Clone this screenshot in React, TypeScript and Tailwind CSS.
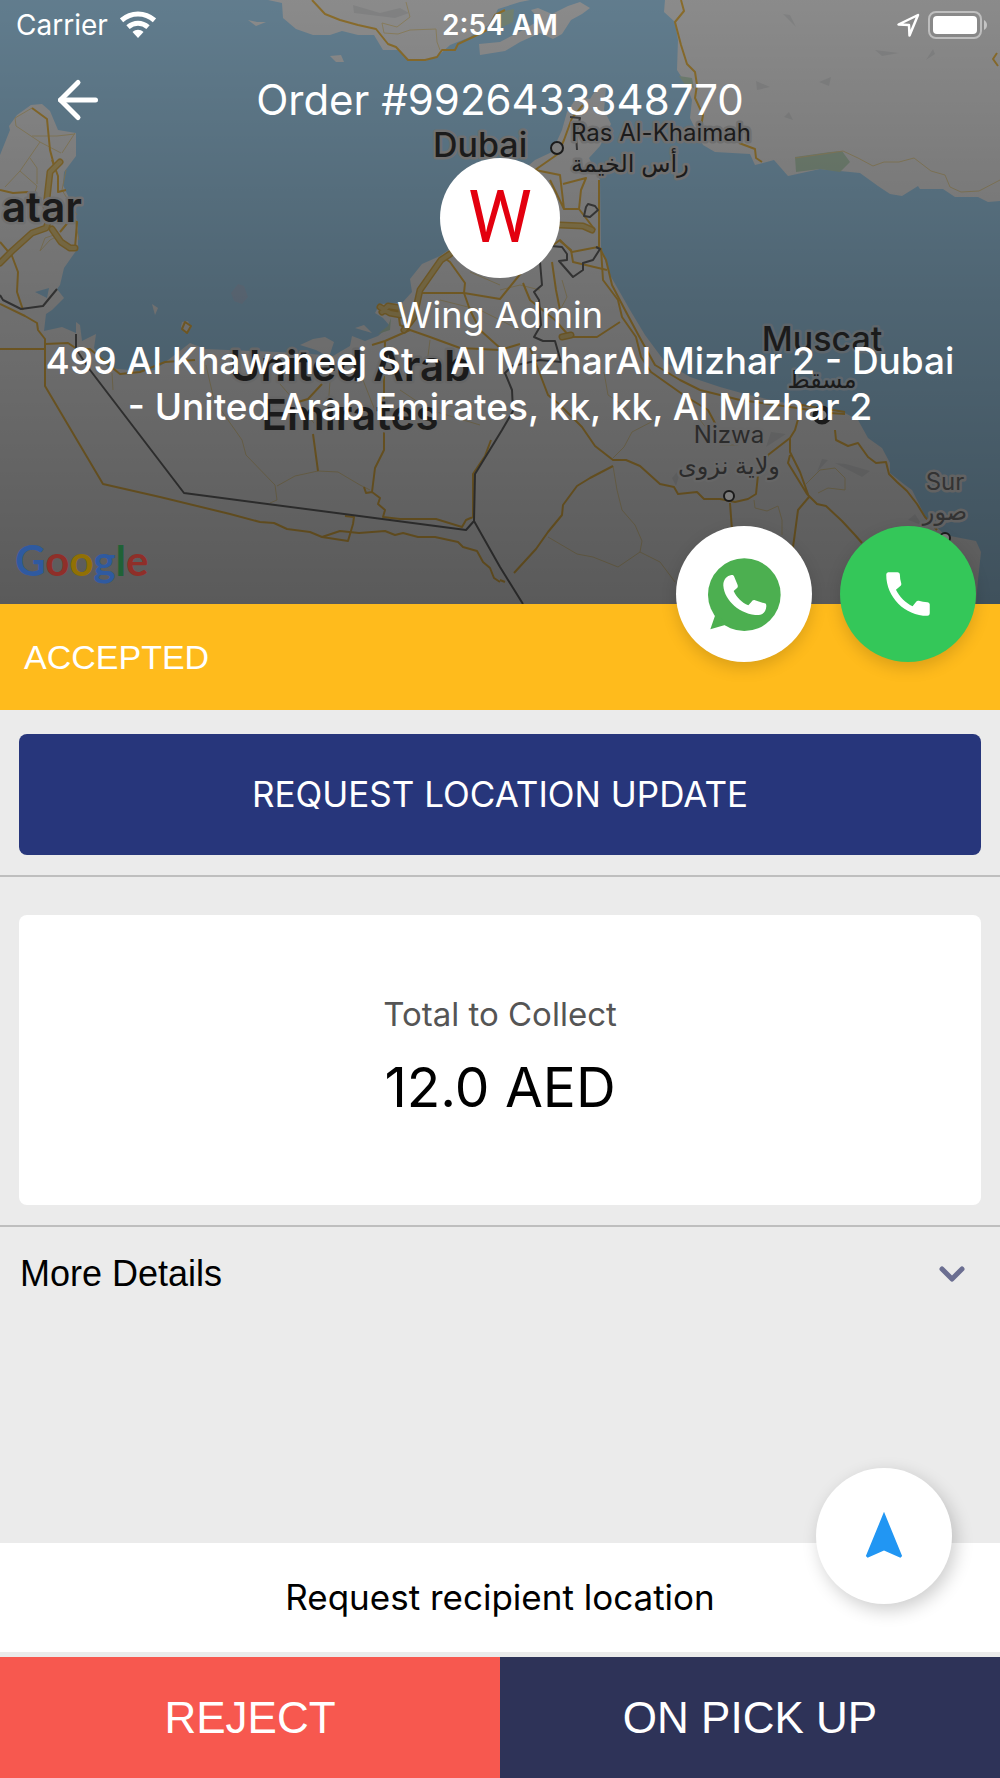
import type { ReactNode } from 'react'
import { ArrowLeft, ChevronDown } from 'lucide-react'
import { MdCall, MdNavigation } from 'react-icons/md'

const order = {
  number: '9926433348770',
  customer: 'Wing Admin',
  address: '499 Al Khawaneej St - Al MizharAl Mizhar 2 - Dubai - United Arab Emirates, kk, kk, Al Mizhar 2',
  status: 'ACCEPTED',
  total: '12.0 AED',
}

const land = [
  // Qatar, the Emirates and Oman
  'M0 155L10 130L9 126L17 115L31 105L42 104L50 111L58 130L76 133V156L64 172L63 185L70 200L76 218L78 228V248L64 268L60 285L57 289L64 298L52 310L46 314L44 331L62 327L76 333V322L80 325L82 341L96 334L94 348L108 368L140 371L155 370L172 357L190 343L205 349L300 353L333 356L350 346L352 336L365 341L378 336L390 326L383 318L375 313L380 304L402 303L412 292L410 279L422 264L440 256L470 235L500 190L535 160L552 152L562 130L567 112L577 97L590 99L600 83L606 88L604 110L611 124L600 146L589 158L600 180L601 248L610 275L630 310L645 335L665 362L690 377L720 387L745 394L780 402L815 407L845 413L858 420L868 438L882 448L890 463V473L905 485L912 490L925 516L945 535L976 541L981 552L978 580L976 604H0Z',
  // Iranian coast
  'M268 0L282 3L283 18L296 29L313 35L330 35L342 31L358 35L374 35L383 50L400 50L408 60L425 61L438 56L450 45L470 37L490 24L498 9L520 2L530 0Z',
  'M665 0L664 12L675 22L678 40L677 70L686 84L692 100L690 118L703 145L715 152L750 154L755 165L774 160L788 176L820 169L860 173L878 186L890 194L902 196L918 186L920 189H943L955 197H978L988 202L1000 201V0Z',
  // islands
  'M479 44L500 42L523 30L540 20L531 10L538 8L552 14L568 6L580 2L590 8L582 14L571 20L562 34L553 39L540 33L520 42L505 51L480 55Z',
  'M248 20L257 22L266 22L256 26Z',
  'M330 56L341 55L344 62L336 62Z',
  'M152 304L158 308L155 315Z',
  'M182 322L188 321L191 328L185 333L181 327Z',
  'M300 345L313 339L325 337L334 342L329 357L316 350Z',
  'M355 328L364 325L372 333Z',
]

const parks = ['M795 157L830 152L842 151L850 162L840 172L820 169L796 172Z', 'M679 76L692 78L694 88L686 86Z', 'M500 12L514 9L513 22L500 28Z', 'M378 334L388 326L391 318L390 330Z']

const hills = ['M353 5L380 13L400 8L409 13L395 18L354 13Z', 'M783 14L790 15L796 27Z', 'M875 50L899 53L882 56Z', 'M926 60L933 49L935 54Z', 'M756 81L770 87L757 90Z', 'M819 82L831 77L829 86Z', 'M784 117L789 112L793 120Z', 'M766 447L771 432L786 434Z', 'M817 472L822 459L828 460Z', 'M835 463L846 464L870 471L862 477Z', 'M672 478L682 466L676 486Z', 'M908 520L915 514L922 525Z']

const highways = [
  'M0 263L12 251L32 233L46 228L52 212L46 207L50 172L60 162',
  'M52 229L61 242L70 248L75 248',
  'M450 254L441 260L420 290L414 317L404 330',
  'M382 312L388 306L400 308L401 315L390 313L380 307',
  'M560 225L583 226L592 230',
  'M562 337L571 335',
]

const mainRoads = [
  'M32 108L47 119L50 150L54 165',
  'M0 190L13 193L28 192L30 195',
  'M0 242L12 256L18 272L17 292L23 310',
  'M52 160L58 176V192L66 190',
  'M60 232L70 220L77 222L75 248',
  'M0 304L25 316L37 323L38 330L45 339V386L103 484L160 497L230 514L260 522L274 523L287 529L310 532L322 537L348 541L353 524L354 517L345 516',
  'M0 349H45V344L68 343L77 349H90L110 366L120 374L140 372L165 362L195 360',
  'M322 537L340 531L359 533L385 531L395 535L403 533L418 537L435 537L458 542L463 547L477 551L483 562L490 568L494 578L500 582',
  'M372 345L385 341L410 330L400 325L398 310L390 306',
  'M410 330L430 337L460 348L500 350L520 344',
  'M422 293H445L464 293L470 310L480 330L500 348',
  'M464 293L465 283L450 262L443 257',
  'M385 342L384 380V450L375 468L372 492L366 493L364 487M372 492L380 498L378 504L385 510L383 517L400 519L436 519L462 527L466 520L473 517V474L485 456L491 440',
  'M313 434L318 471M322 384L308 399L298 402',
  'M464 293L500 299L530 262L560 240L572 252L598 247',
  'M599 180V247L606 260L612 285L625 310L640 338L655 365L680 380L700 390L740 400L790 407L830 413L845 414',
  'M601 248L603 280L618 300L622 317L636 337L641 357L651 372L685 396L708 410L716 425',
  'M505 10L495 15L487 30L473 37L458 44L455 50L442 50L437 57L425 60H408L396 47L388 44L376 29L358 25L340 20L325 14L312 0',
  'M681 0L684 11L675 22L681 45L687 64L695 72L697 85L695 98L703 115L701 127',
  'M739 143L755 149L756 158L762 162',
  'M583 105L572 118L564 140L558 154L535 170L560 175L562 192L564 209L550 180',
  'M564 209H579L595 230M579 209L581 190L586 178L563 184',
  'M560 241L571 250L573 262L607 270',
  'M552 262L556 290L560 310M523 283L530 300L555 320L570 337H597L620 322',
  'M530 348L548 395L560 405L582 427L595 446L613 460L626 460L640 466L660 484L674 487L678 494L697 492L704 499H720L735 502L748 499L756 494L758 475L768 455L790 438L795 430L802 405L845 412',
  'M613 466L590 478L577 486L563 505L562 515L548 532L536 549L514 573',
  'M730 503L732 530L740 560',
  'M790 438L790 452L800 472L809 497L798 510L794 540L791 560L800 555M790 455L788 463L807 494L817 504L826 506L842 521L855 535L862 543',
  'M835 430L836 440L848 446L858 443L868 457L876 463L886 462L889 474L897 482L907 491L917 504L925 517L937 530',
  'M500 580L505 582M997 53L993 59L998 66',
  'M185 322L191 326L187 333L182 329Z',
]

const minorRoads = [
  'M40 142L16 126L15 118L32 108M40 142L20 171L37 186L33 198M40 142L61 153M30 158L37 168V184M20 171L5 187M32 136H57L75 134M62 153L75 133',
  'M66 170L62 190L77 215M72 205L79 240M54 235L45 238L40 251L50 240L60 235',
  'M112 373L113 390M206 365L214 400L242 440L246 455L275 485L277 500L270 503M277 486L295 476L318 471L338 472L360 485L370 490',
  'M280 384L320 430M330 380L328 410M363 380L374 408M400 390L430 410L480 425M430 340L425 380',
  'M406 2L410 17L397 27L382 23L384 33L398 34L410 30L436 29L437 42L440 50',
  'M795 158L830 153L843 151L858 158L873 166L884 162L899 162L914 158L931 171L945 175L950 187L961 192L979 191L1000 180',
  'M613 458L624 447L632 432L655 420M604 372L608 395L630 410M613 466L617 490L622 510L635 525L642 541L640 552L618 567L593 557L577 554L548 537M640 552L660 562L675 582',
  'M806 484L820 470L835 468L845 478L845 490L828 488L818 493M754 500L755 508L767 511L778 506L782 520L782 535',
  'M500 290L520 285L540 290M562 280L567 297L560 310',
  'M470 272L500 285M440 300L480 310L520 330M700 420L720 445L738 445',
]

const borders = [
  'M0 295L3 300L21 309L43 306L57 289',
  'M76 334V349L90 370L184 493L466 530L474 521L475 474L502 430L513 411L512 390L505 373L512 366L540 360L561 362L555 341H543L534 337L541 325L539 300L534 292L542 285L540 262',
  'M474 521L500 567L523 604',
  'M551 246L562 247L567 254V260L559 261L573 277L583 270V263L593 260L600 249L596 247',
  'M586 207L588 204L595 206L598 210L590 217L584 216Z',
  'M570 117L580 118L576 134L577 150',
]

function MapBackdrop() {
  return (
    <svg
      className="absolute inset-0 h-full w-full"
      viewBox="0 0 1000 604"
      preserveAspectRatio="xMidYMid slice"
      aria-hidden="true"
    >
      <defs>
        <linearGradient id="shade" x1="0" y1="0" x2="0" y2="1">
          <stop offset="0" stopColor="#000" stopOpacity="0.43" />
          <stop offset="0.5" stopColor="#000" stopOpacity="0.54" />
          <stop offset="1" stopColor="#000" stopOpacity="0.63" />
        </linearGradient>
      </defs>
      <rect width="1000" height="604" fill="#aadaf8" />
      <g fill="#f3f3f3">
        {land.map((d) => <path key={d} d={d} />)}
      </g>
      <path d="M231 293L238 284L244 286L248 297L242 304L234 301Z" fill="#b9d3ee" />
      <path d="M35 292L49 288L47 298Z" fill="#aadaf8" />
      <g fill="#e2e3e4">
        {hills.map((d) => <path key={d} d={d} />)}
      </g>
      <g fill="#c5e0c6">
        {parks.map((d) => <path key={d} d={d} />)}
      </g>
      <g fill="none" stroke="#f0dca4" strokeWidth="1">
        {minorRoads.map((d) => <path key={d} d={d} />)}
      </g>
      <g fill="none" stroke="#f0bd4c" strokeWidth="2" strokeLinejoin="round">
        {mainRoads.map((d) => <path key={d} d={d} />)}
      </g>
      <g fill="none" stroke="#e6b850" strokeWidth="7" strokeLinejoin="round" strokeLinecap="round">
        {highways.map((d) => <path key={d} d={d} />)}
      </g>
      <g fill="none" stroke="#f0d488" strokeWidth="4" strokeLinejoin="round" strokeLinecap="round">
        {highways.map((d) => <path key={d} d={d} />)}
      </g>
      <g fill="none" stroke="#6b6b6b" strokeWidth="2" strokeLinejoin="round">
        {borders.map((d) => <path key={d} d={d} />)}
      </g>
      <rect width="1000" height="604" fill="url(#shade)" />

      {/* place names */}
      <g
        className="font-['Inter','DejaVu_Sans',sans-serif]"
        fill="#1b1b1b"
        stroke="#707070"
        strokeWidth="5"
        strokeLinejoin="round"
        paintOrder="stroke"
      >
        <g fontWeight="600" fontSize="42">
          <text x="2" y="222">atar</text>
          <text x="350" y="381" textAnchor="middle" stroke="#666">United Arab</text>
          <text x="350" y="430" textAnchor="middle" stroke="#666">Emirates</text>
        </g>
        <g fontWeight="500" fontSize="34">
          <text x="433" y="157">Dubai</text>
          <text x="822" y="351" textAnchor="middle" stroke="#5e666c">Muscat</text>
        </g>
        <g fontSize="24">
          <text x="571" y="141">Ras Al-Khaimah</text>
          <text x="571" y="172">رأس الخيمة</text>
          <text x="822" y="388" textAnchor="middle" stroke="#5e666c">مسقط</text>
          <text x="729" y="443" textAnchor="middle" fill="#2b2b2b" stroke="#666">Nizwa</text>
          <text x="729" y="474" textAnchor="middle" fill="#2b2b2b" stroke="#666">ولاية نزوى</text>
          <text x="945" y="490" textAnchor="middle" fill="#333" stroke="#626262">Sur</text>
          <text x="945" y="520" textAnchor="middle" fill="#333" stroke="#626262">صور</text>
        </g>
      </g>
      <g fill="#7c7c7c" stroke="#1b1b1b" strokeWidth="2">
        <circle cx="557" cy="148" r="6" />
        <circle cx="729" cy="496" r="5" />
        <circle cx="945" cy="538" r="5" />
        <circle cx="822" cy="415" r="7" strokeWidth="5" />
      </g>

      <text x="15" y="576" fontSize="42" fontWeight="700" className="font-['Lato',sans-serif]">
        <tspan fill="#2f5aa0">G</tspan>
        <tspan fill="#8f2f29">o</tspan>
        <tspan fill="#917004">o</tspan>
        <tspan fill="#2f5aa0">g</tspan>
        <tspan fill="#1f6236">l</tspan>
        <tspan fill="#8f2f29">e</tspan>
      </text>
    </svg>
  )
}

function WifiIcon() {
  return (
    <svg className="h-7 w-9" viewBox="0 0 36 27" fill="none" stroke="#fff" aria-hidden="true">
      <path d="M1.500 8.800C11 0.300 25 0.300 34.500 8.800" strokeWidth="5" />
      <path d="M8 15.600C14 10.300 22 10.300 28 15.600" strokeWidth="5" />
      <path d="M12.500 20.500C16 17.500 20 17.500 23.500 20.500L18 26.500Z" fill="#fff" stroke="none" />
    </svg>
  )
}

function StatusBar() {
  return (
    <div className="grid h-[50px] grid-cols-3 items-center px-3 text-[28px] leading-8">
      <div className="flex items-center gap-3 pl-1">
        <span>Carrier</span>
        <WifiIcon />
      </div>
      <span className="text-center font-semibold">2:54 AM</span>
      <div className="flex items-center justify-end gap-2">
        <svg className="size-6" viewBox="0 0 24 24" fill="none" stroke="#fff" strokeWidth="2.500" strokeLinejoin="round" aria-hidden="true">
          <path d="M22 2L2.500 11.500L13 12L13.500 22.500Z" />
        </svg>
        <svg className="h-7 w-[60px]" viewBox="0 0 60 28" aria-hidden="true">
          <rect x="1" y="1" width="52" height="26" rx="7" fill="none" stroke="#fff" strokeOpacity="0.45" strokeWidth="2" />
          <rect x="5" y="5" width="44" height="18" rx="4" fill="#fff" />
          <path d="M56 9C60 11 60 17 56 19Z" fill="#fff" fillOpacity="0.5" />
        </svg>
      </div>
    </div>
  )
}

function WhatsAppIcon() {
  return (
    <svg className="size-[75px]" viewBox="620 770 225 225" aria-hidden="true">
      <circle cx="732" cy="883" r="109" fill="#4caf50" />
      <path d="M640 935L644 946L630 987L674 974L690 980Z" fill="#4caf50" />
      <path
        d="M693 824C680 826 668 838 669 856C672 900 720 944 775 944C790 943 797 932 798 918C798 912 797 910 793 909L764 900C759 898 756 901 753 905L744 915C725 908 708 890 700 872L711 862C713 859 713 856 711 852L701 828C699 824 697 823 693 824Z"
        fill="#fff"
      />
    </svg>
  )
}

function RoundButton({ label, className, children }: { label: string; className: string; children: ReactNode }) {
  return (
    <button
      type="button"
      aria-label={label}
      className={`flex size-[136px] items-center justify-center rounded-full ${className}`}
    >
      {children}
    </button>
  )
}

export default function App() {
  return (
    <div className="flex min-h-screen flex-col bg-[#ebebeb] font-['Inter',sans-serif] text-black">
      <header className="relative pb-[174px] text-white">
        <MapBackdrop />

        <div className="relative">
          <StatusBar />

          <div className="grid grid-cols-[1fr_auto_1fr] items-center px-12 pt-5">
            <button type="button" aria-label="Back" className="size-[60px]">
              <ArrowLeft size={60} strokeWidth={2} />
            </button>
            <h1 className="text-[42px] leading-[60px]">Order #{order.number}</h1>
          </div>

          <div className="flex flex-col items-center px-10 pt-7 text-center">
            <div className="flex size-[120px] items-center justify-center rounded-full bg-white font-['Roboto',sans-serif] text-[72px] leading-none text-[#e3000f]">
              W
            </div>
            <p className="mt-[14px] text-[36px] leading-[46px]">{order.customer}</p>
            <p className="text-[37px] font-medium leading-[46px]">{order.address}</p>
          </div>
        </div>

        <div className="absolute -bottom-[58px] right-6 z-10 flex gap-7">
          <RoundButton label="WhatsApp" className="bg-white shadow-[0_6px_16px_rgba(0,0,0,0.15)]">
            <WhatsAppIcon />
          </RoundButton>
          <RoundButton label="Call" className="bg-[#34c759] shadow-[0_6px_16px_rgba(0,0,0,0.15)]">
            <MdCall size={58} color="#fff" />
          </RoundButton>
        </div>
      </header>

      <div className="bg-[#ffbb1c] px-6 py-[30px] font-['Liberation_Sans',sans-serif] text-[34px] leading-[46px] text-white">
        {order.status}
      </div>

      <div className="border-b-2 border-[#bebebe] px-[19px] pb-5 pt-6">
        <button type="button" className="h-[121px] w-full rounded-lg bg-[#27367b] text-[35px] text-white">
          REQUEST LOCATION UPDATE
        </button>
      </div>

      <div className="border-b-2 border-[#bebebe] px-[19px] pb-5 pt-[38px]">
        <div className="flex h-[290px] flex-col items-center justify-center rounded-lg bg-white pb-3">
          <p className="text-[33px] leading-[46px] text-[#555]">Total to Collect</p>
          <p className="mt-5 text-[55px] leading-[60px]">{order.total}</p>
        </div>
      </div>

      <button
        type="button"
        className="flex items-center justify-between pb-6 pl-5 pr-7 pt-6 font-['Liberation_Sans',sans-serif] text-[36px] leading-[46px]"
      >
        More Details
        <ChevronDown size={40} strokeWidth={3} color="#6b6e91" />
      </button>

      <footer className="relative mt-auto">
        <button type="button" className="h-[109px] w-full bg-white text-[35px]">
          Request recipient location
        </button>
        <div className="absolute -top-[75px] right-12">
          <RoundButton label="Navigate" className="bg-white shadow-[4px_6px_18px_rgba(0,0,0,0.2)]">
            <MdNavigation size={58} color="#2196f3" />
          </RoundButton>
        </div>
        <div className="mt-[5px] grid grid-cols-2 font-['Liberation_Sans',sans-serif] text-[44px] text-white">
          <button type="button" className="h-[121px] bg-[#f7584f]">REJECT</button>
          <button type="button" className="h-[121px] bg-[#2e3358]">ON PICK UP</button>
        </div>
      </footer>
    </div>
  )
}
